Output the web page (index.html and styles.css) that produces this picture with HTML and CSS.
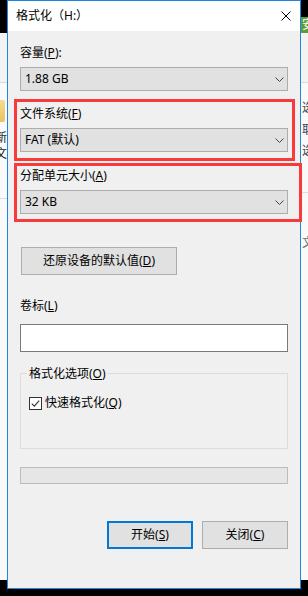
FILE: index.html
```html
<!DOCTYPE html>
<html lang="zh-CN">
<head>
<meta charset="utf-8">
<title>格式化</title>
<link rel="stylesheet" href="styles.css">
</head>
<body>
<div class="screen">
  <div class="strip strip-left">
    <div class="s-black-left"></div>
    <div class="s-ribbon"></div>
    <div class="s-pane">
      <div class="ls-folder"></div>
      <div class="ls-text ls-new">新</div>
      <div class="ls-text">文件</div>
      <div class="s-sep ls-sep"></div>
    </div>
  </div>

  <div class="window">
    <div class="titlebar">
      <span class="title">格式化（H:）</span>
      <svg class="close" width="10" height="10" viewBox="0 0 10 10" aria-hidden="true">
        <path d="M0.5 0.5 L9.5 9.5 M9.5 0.5 L0.5 9.5" stroke="#000" stroke-width="1" fill="none"/>
      </svg>
    </div>
    <div class="body">
      <div class="field">
        <div class="label">容量(<u>P</u>):</div>
        <div class="combo"><span>1.88 GB</span>
          <svg class="chev" width="9" height="5" viewBox="0 0 9 5"><path d="M0.5 0.5 L4.5 4.5 L8.5 0.5" stroke="#444" stroke-width="1" fill="none"/></svg>
        </div>
      </div>
      <div class="field field-fs">
        <div class="label">文件系统(<u>F</u>)</div>
        <div class="combo"><span>FAT (默认)</span>
          <svg class="chev" width="9" height="5" viewBox="0 0 9 5"><path d="M0.5 0.5 L4.5 4.5 L8.5 0.5" stroke="#444" stroke-width="1" fill="none"/></svg>
        </div>
      </div>
      <div class="field field-au">
        <div class="label">分配单元大小(<u>A</u>)</div>
        <div class="combo"><span>32 KB</span>
          <svg class="chev" width="9" height="5" viewBox="0 0 9 5"><path d="M0.5 0.5 L4.5 4.5 L8.5 0.5" stroke="#444" stroke-width="1" fill="none"/></svg>
        </div>
      </div>
      <button class="btn btn-restore">还原设备的默认值(<u>D</u>)</button>
      <div class="field field-vol">
        <div class="label">卷标(<u>L</u>)</div>
        <div class="textbox"></div>
      </div>
      <div class="group">
        <div class="legend">格式化选项(<u>O</u>)</div>
        <div class="check">
          <span class="box">
            <svg width="11" height="11" viewBox="0 0 11 11"><path d="M1.8 5.6 L4.3 8.1 L9.2 2.6" stroke="#333" stroke-width="1.1" fill="none"/></svg>
          </span>
          <span class="check-label">快速格式化(<u>Q</u>)</span>
        </div>
      </div>
      <div class="progress"></div>
      <div class="actions">
        <button class="btn btn-primary">开始(<u>S</u>)</button>
        <button class="btn btn-action">关闭(<u>C</u>)</button>
      </div>
    </div>
  </div>

  <div class="strip strip-right">
    <div class="s-black-right"></div>
    <div class="rs-green">安</div>
    <div class="s-ribbon"></div>
    <div class="s-pane rs-pane">
      <div class="rs-text">选</div>
      <div class="rs-text">取</div>
      <div class="rs-text">选</div>
      <div class="s-sep rs-sep"></div>
      <div class="rs-text rs-low">文/</div>
    </div>
  </div>

  <div class="mark mark-fs"></div>
  <div class="mark mark-au"></div>
</div>
</body>
</html>
```

FILE: styles.css
```css
* { box-sizing: border-box; }

html, body {
  margin: 0;
  padding: 0;
  background: #000;
}

body {
  font-family: "Noto Sans", "Noto Sans CJK SC", sans-serif;
  font-size: 12px;
  line-height: 16px;
  color: #000;
}

u {
  text-decoration: underline;
  text-underline-offset: 1px;
}

.screen {
  position: relative;
  width: 308px;
  height: 596px;
  display: flex;
  align-items: flex-start;
  overflow: hidden;
}

/* background slivers */
.strip {
  width: 7px;
  height: 580px;
  flex: none;
  overflow: hidden;
  display: flex;
  flex-direction: column;
  background: #f9f9f9;
}

.s-black-left { height: 33px; background: #000; flex: none; }
.s-black-right { height: 17px; background: #000; flex: none; }

.rs-green {
  height: 16px;
  flex: none;
  background: #5e9c35;
  color: #fff;
  line-height: 16px;
  padding-left: 1px;
  white-space: nowrap;
}

.s-ribbon {
  height: 50px;
  flex: none;
  background: #f3f3f3;
  border-bottom: 1px solid #dadada;
}

.s-pane {
  flex: 1;
  background: #f9f9f9;
  display: flex;
  flex-direction: column;
}

.ls-folder {
  margin-top: 17px;
  width: 5px;
  height: 22px;
  flex: none;
  background: linear-gradient(#f7dc8e, #e8c35e);
  border-radius: 0 2px 2px 0;
}

.ls-text {
  margin-left: -5px;
  white-space: nowrap;
  color: #222;
  line-height: 16px;
  height: 16px;
  flex: none;
}

.ls-new { margin-top: 8px; }

.s-sep {
  height: 1px;
  background: #dcdcdc;
  flex: none;
}

.ls-sep { margin-top: 36px; }

.rs-pane { padding-top: 14px; padding-left: 1px; }

.rs-text {
  line-height: 21.5px;
  color: #444;
  white-space: nowrap;
  flex: none;
}

.rs-sep { margin-top: 30px; }

.rs-low { margin-top: 39px; color: #666; }

/* window */
.window {
  width: 294px;
  height: 589px;
  flex: none;
  border: 1px solid #1c86e0;
  background: #f0f0f0;
  display: flex;
  flex-direction: column;
}

.titlebar {
  height: 30px;
  flex: none;
  background: #fff;
  display: flex;
  align-items: center;
  justify-content: space-between;
  padding: 0 9px 0 8px;
}

.title { white-space: nowrap; }

.close { display: block; }

.body {
  display: flex;
  flex-direction: column;
  padding: 14px 12px 0 12px;
}

.field {
  display: flex;
  flex-direction: column;
  gap: 6px;
}

.field-fs { margin-top: 15px; }
.field-au { margin-top: 16px; }
.field-vol { margin-top: 23px; gap: 10px; }

.label { white-space: nowrap; }

.combo {
  height: 24px;
  border: 1px solid #adadad;
  background: #e1e1e1;
  display: flex;
  align-items: center;
  justify-content: space-between;
  padding: 0 3px 0 4px;
  white-space: nowrap;
}

.chev { display: block; }

.btn {
  font: inherit;
  color: #000;
  height: 28px;
  border: 1px solid #adadad;
  background: #e1e1e1;
  padding: 0;
  margin: 0;
  display: flex;
  align-items: center;
  justify-content: center;
  white-space: nowrap;
}

.btn-restore {
  margin-top: 33px;
  margin-left: 1px;
  width: 156px;
  align-self: flex-start;
}

.textbox {
  height: 28px;
  border: 1px solid #7a7a7a;
  background: #fff;
}

.group {
  position: relative;
  margin-top: 21px;
  height: 76px;
  border: 1px solid #dcdcdc;
  padding: 21px 0 0 8px;
}

.legend {
  position: absolute;
  top: -8px;
  left: 6px;
  padding: 0 2px;
  background: #f0f0f0;
  white-space: nowrap;
}

.check {
  display: flex;
  align-items: center;
  height: 16px;
  gap: 3px;
}

.box {
  width: 13px;
  height: 13px;
  border: 1px solid #333;
  background: #fff;
  display: block;
  flex: none;
}

.box svg { display: block; }

.check-label { white-space: nowrap; }

.progress {
  margin-top: 18px;
  height: 17px;
  border: 1px solid #bcbcbc;
  background: #e6e6e6;
}

.actions {
  margin-top: 37px;
  display: flex;
  justify-content: flex-end;
  gap: 9px;
}

.btn-primary,
.btn-action { width: 86px; }

.btn-primary { border: 2px solid #0078d7; }

/* red annotation rectangles */
.mark {
  position: absolute;
  border: 3px solid #f83a3a;
}

.mark-fs { left: 14px; top: 99px; width: 281px; height: 62px; }
.mark-au { left: 14px; top: 163px; width: 288px; height: 59px; }
```
